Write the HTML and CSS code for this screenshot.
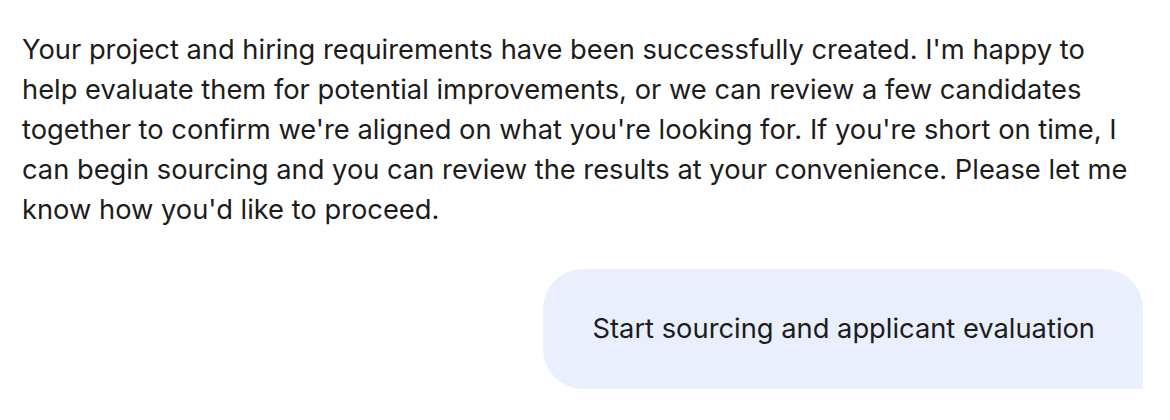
FILE: index.html
```html
<!DOCTYPE html>
<html lang="en">
<head>
<meta charset="utf-8">
<link rel="stylesheet" href="styles.css">
</head>
<body>
<div class="chat">
  <p class="assistant">Your project and hiring requirements have been successfully created. I'm happy to help evaluate them for potential improvements, or we can review a few candidates together to confirm we're aligned on what you're looking for. If you're short on time, I can begin sourcing and you can review the results at your convenience. Please let me know how you'd like to proceed.</p>
  <div class="user-row">
    <div class="bubble">Start sourcing and applicant evaluation</div>
  </div>
</div>
</body>
</html>
```

FILE: styles.css
```css
html, body {
  margin: 0;
  padding: 0;
  background: #ffffff;
}
body {
  font-family: Inter, "Noto Sans", sans-serif;
  color: #1c1c1c;
  font-size: 27.3px;
  line-height: 40px;
}
.chat {
  display: flex;
  flex-direction: column;
  gap: 39px;
  padding: 30px 27px 0 22px;
}
.assistant {
  margin: 0;
  padding-right: 15px;
}
.user-row {
  display: flex;
  justify-content: flex-end;
}
.bubble {
  background: #e9effd;
  border-radius: 40px 40px 0 40px;
  padding: 40px 48px 40px 50px;
}
```
